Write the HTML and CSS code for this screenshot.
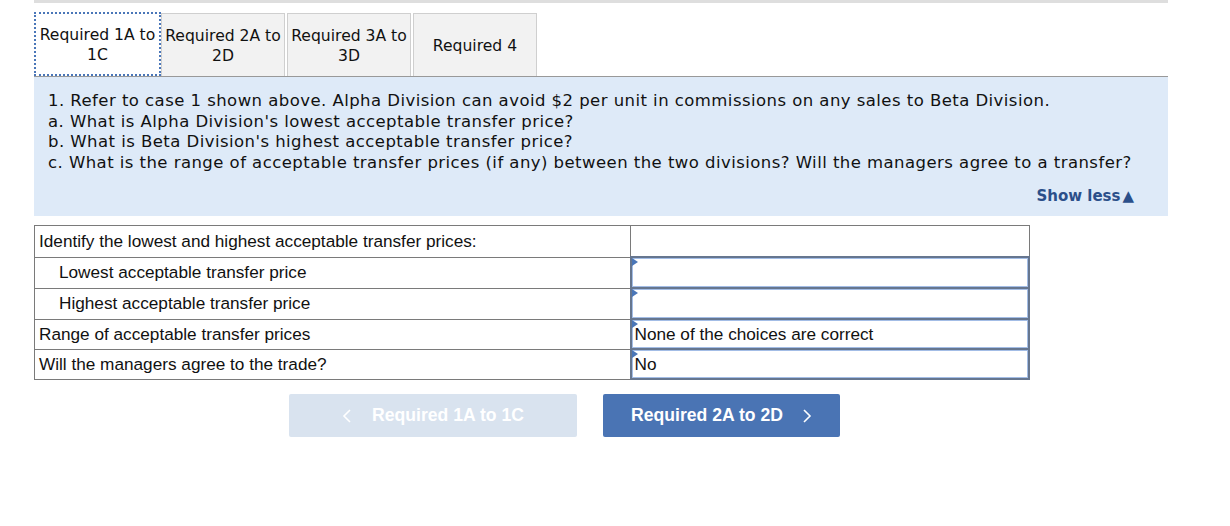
FILE: index.html
```html
<!DOCTYPE html>
<html lang="en">
<head>
  <meta charset="UTF-8" />
  <title>Required 1A to 1C</title>
<link rel="stylesheet" href="styles.css">
</head>
<body>
  <div class="wrap">
    <div class="topbar"></div>

    <div class="tabs">
      <div class="tab active">Required 1A to 1C</div>
      <div class="tab">Required 2A to 2D</div>
      <div class="tab">Required 3A to 3D</div>
      <div class="tab">Required 4</div>
    </div>

    <section class="panel">
      <p>1. Refer to case 1 shown above. Alpha Division can avoid $2 per unit in commissions on any sales to Beta Division.</p>
      <p>a. What is Alpha Division's lowest acceptable transfer price?</p>
      <p>b. What is Beta Division's highest acceptable transfer price?</p>
      <p>c. What is the range of acceptable transfer prices (if any) between the two divisions? Will the managers agree to a transfer?</p>
      <div class="show-less">Show less<span class="arrow">&#9650;</span></div>
    </section>

    <table class="answers">
      <tr class="head">
        <td class="label">Identify the lowest and highest acceptable transfer prices:</td>
        <td></td>
      </tr>
      <tr>
        <td class="label indent">Lowest acceptable transfer price</td>
        <td class="input-cell"><div class="answer"></div></td>
      </tr>
      <tr>
        <td class="label indent">Highest acceptable transfer price</td>
        <td class="input-cell"><div class="answer"></div></td>
      </tr>
      <tr class="short">
        <td class="label">Range of acceptable transfer prices</td>
        <td class="input-cell"><div class="answer">None of the choices are correct</div></td>
      </tr>
      <tr class="short">
        <td class="label">Will the managers agree to the trade?</td>
        <td class="input-cell"><div class="answer">No</div></td>
      </tr>
    </table>

    <div class="nav">
      <button class="btn prev">
        <svg class="chev" width="10" height="14" viewBox="0 0 10 14"><polyline points="8,1 2,7 8,13" fill="none" stroke="#fff" stroke-width="1.6"/></svg>
        Required 1A to 1C
      </button>
      <button class="btn next">
        Required 2A to 2D
        <svg class="chev" width="10" height="14" viewBox="0 0 10 14"><polyline points="2,1 8,7 2,13" fill="none" stroke="#fff" stroke-width="1.6"/></svg>
      </button>
    </div>
  </div>
</body>
</html>
```

FILE: styles.css
```css
* {
  box-sizing: border-box;
}

body {
  margin: 0;
  background: #fff;
  color: #111;
  font-family: "DejaVu Sans", Verdana, sans-serif;
}

.wrap {
  margin-left: 34px;
  width: 1134px;
}

.topbar {
  height: 3px;
  background: #dedede;
}

.tabs {
  display: flex;
  gap: 2px;
  margin-top: 9px;
  align-items: flex-end;
}

.tab {
  width: 124px;
  height: 63px;
  display: flex;
  align-items: center;
  justify-content: center;
  text-align: center;
  font-size: 15.6px;
  line-height: 19.5px;
  background: #f2f2f2;
  border: 1px solid #cfcfcf;
  border-bottom: none;
  padding: 3px 1px 0;
}

.tab.active {
  width: 127px;
  height: 64px;
  background: #fff;
  border: 2px dotted #4a76b8;
  margin-right: -2px;
}

.panel {
  background: #deeaf8;
  border-top: 1px solid #999;
  padding: 14px 34px 10px 14px;
  font-size: 16.5px;
  letter-spacing: 0.45px;
  line-height: 20.7px;
}

.panel p {
  margin: 0;
  white-space: nowrap;
}

.show-less {
  text-align: right;
  font-size: 15px;
  letter-spacing: 0;
  font-weight: bold;
  color: #2b4f8a;
  margin-top: 12px;
  line-height: 20px;
}

.show-less .arrow {
  font-size: 15px;
  margin-left: 2px;
}

.answers {
  margin-top: 9px;
  width: 996px;
  border-collapse: collapse;
  font-family: "Liberation Sans", Arial, sans-serif;
  font-size: 17.2px;
}

.answers td {
  border: 1px solid #7a7a7a;
  padding: 0;
  height: 31px;
}

.answers tr.head td {
  height: 32px;
}

.answers tr.short td {
  height: 30px;
}

.answers td.label {
  width: 596px;
  padding-left: 4px;
}

.answers td.indent {
  padding-left: 24px;
}

.answers td.input-cell {
  border: 2px solid #66768f;
}

.answer {
  position: relative;
  height: 100%;
  border: 1px solid #a3bde6;
  padding: 0 0 0 2px;
  line-height: 26px;
}

.answer::before {
  content: "";
  position: absolute;
  left: -1px;
  top: -1px;
  border-top: 4px solid transparent;
  border-bottom: 4px solid transparent;
  border-left: 6px solid #4a76b8;
}

.nav {
  display: flex;
  gap: 26px;
  margin: 14px 0 0 255px;
}

.btn {
  height: 43px;
  border: none;
  border-radius: 2px;
  color: #fff;
  font-family: "Liberation Sans", Arial, sans-serif;
  font-size: 17.6px;
  font-weight: bold;
  display: flex;
  align-items: center;
  justify-content: center;
}

.btn.prev {
  width: 288px;
  background: #d9e3ef;
}

.btn.prev .chev {
  margin-right: 20px;
}

.btn.next {
  width: 237px;
  background: #4a74b4;
}

.btn.next .chev {
  margin-left: 19px;
}
```
